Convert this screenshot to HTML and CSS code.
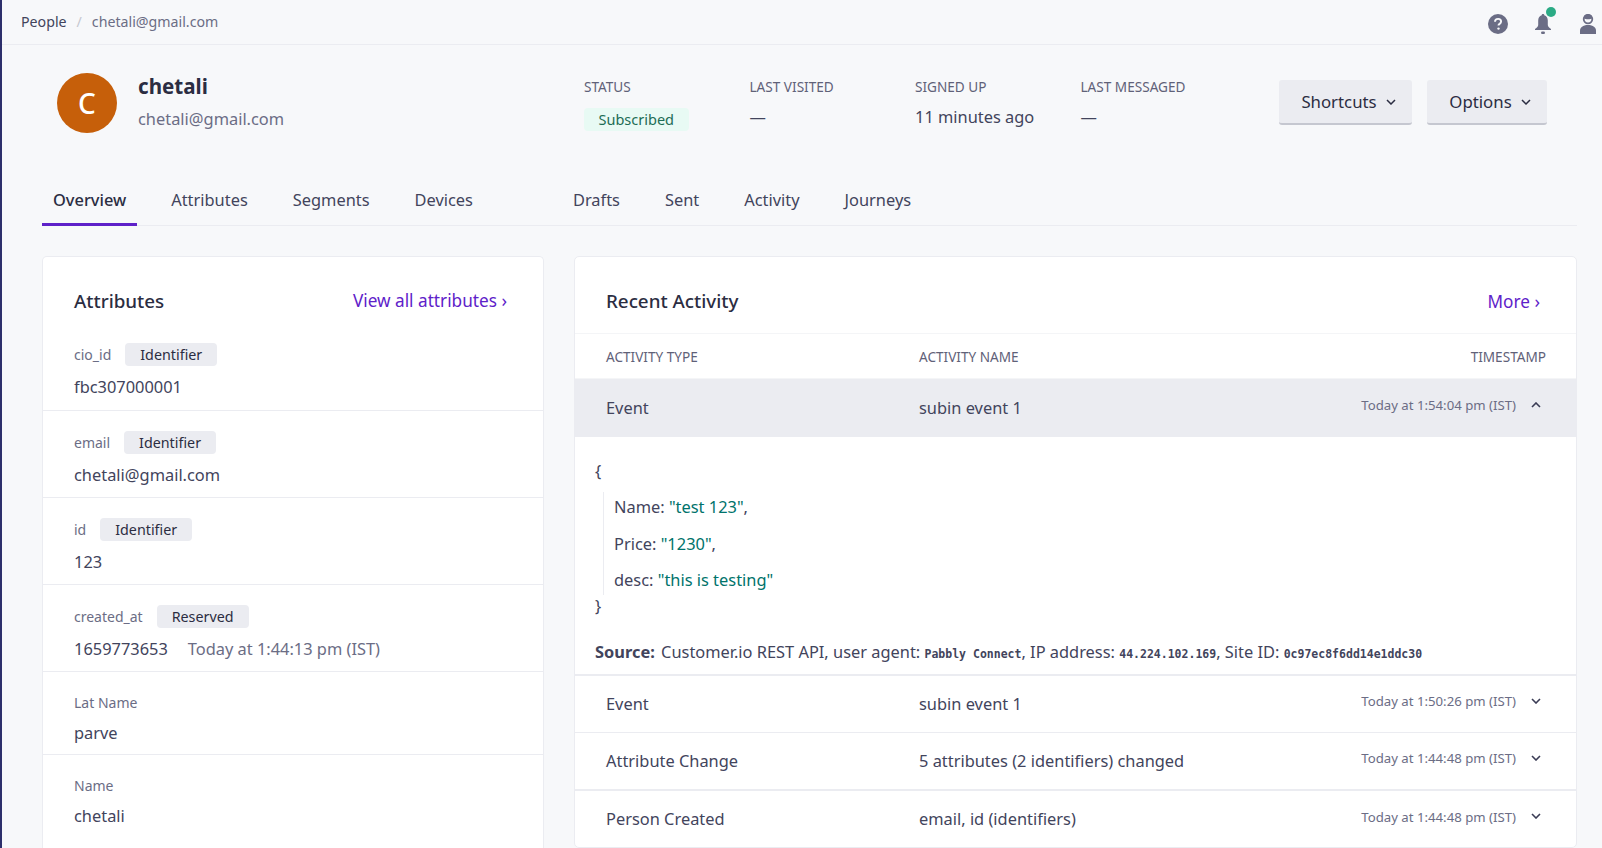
FILE: index.html
```html
<!DOCTYPE html>
<html lang="en">
<head>
    <meta charset="UTF-8">
    <title>chetali@gmail.com - People</title>
    <link rel="stylesheet" href="styles.css">
</head>
<body>
    <div class="topbar">
        <div class="crumbs">
            <span class="crumb_root">People</span>
            <span class="crumb_sep">/</span>
            <span class="crumb_now">chetali@gmail.com</span>
        </div>
        <div class="top_icons">
            <svg class="help_icon" width="20" height="20" viewBox="0 0 20 20">
                <circle cx="10" cy="10" r="10" fill="#6b6d85"/>
                <path d="M7 7.8c0-1.8 1.3-2.9 3.1-2.9 1.8 0 3 1 3 2.6 0 1.2-.6 1.8-1.5 2.4-.8.5-1.1.9-1.1 1.7" fill="none" stroke="#f7f8fa" stroke-width="1.9"/>
                <circle cx="10.5" cy="14.6" r="1.2" fill="#f7f8fa"/>
            </svg>
            <div class="bell_wrap">
                <svg width="16" height="20" viewBox="0 0 16 20">
                    <path d="M8 0c.8 0 1.3.5 1.3 1.3 2.4.7 3.5 2.700 3.500 5.200v4.500c0 1.200 1.200 2.600 3.200 4v1H0v-1c2-1.400 3.200-2.800 3.200-4V6.500c0-2.500 1.100-4.500 3.500-5.200C6.700.5 7.200 0 8 0z" fill="#6b6d85"/>
                    <rect x="6" y="17.500" width="4" height="2.500" rx="1.200" fill="#6b6d85"/>
                </svg>
                <span class="bell_dot"></span>
            </div>
            <svg class="user_icon" width="16" height="20" viewBox="0 0 16 20">
                <path d="M8 0.800a4.300 4.300 0 1 0 0 8.600a4.300 4.300 0 1 0 0-8.600z" fill="none" stroke="#6b6d85" stroke-width="1.800"/>
                <path d="M3.900 4.200c1.400 1.300 6.800 1.300 8.200 0l-.6-2.600-2.500-1h-2l-2.500 1z" fill="#6b6d85"/>
                <path d="M0 20v-3.500c0-3 2.800-5.500 8-5.500s8 2.500 8 5.500V20z" fill="#6b6d85"/>
            </svg>
        </div>
    </div>

    <div class="profile">
        <div class="avatar">C</div>
        <div class="who">
            <div class="who_name">chetali</div>
            <div class="who_mail">chetali@gmail.com</div>
        </div>
        <div class="stats">
            <div class="stat">
                <div class="stat_label">STATUS</div>
                <span class="badge_green">Subscribed</span>
            </div>
            <div class="stat">
                <div class="stat_label">LAST VISITED</div>
                <div class="stat_value">—</div>
            </div>
            <div class="stat">
                <div class="stat_label">SIGNED UP</div>
                <div class="stat_value">11 minutes ago</div>
            </div>
            <div class="stat">
                <div class="stat_label">LAST MESSAGED</div>
                <div class="stat_value">—</div>
            </div>
        </div>
        <div class="actions">
            <button class="action_btn shortcuts_btn">Shortcuts
                <svg width="10" height="6" viewBox="0 0 10 6"><path d="M1 1l4 4 4-4" fill="none" stroke="#2b2d42" stroke-width="1.500"/></svg>
            </button>
            <button class="action_btn options_btn">Options
                <svg width="10" height="6" viewBox="0 0 10 6"><path d="M1 1l4 4 4-4" fill="none" stroke="#2b2d42" stroke-width="1.500"/></svg>
            </button>
        </div>
    </div>

    <div class="tabs">
        <a class="tab tab_active">Overview</a>
        <a class="tab">Attributes</a>
        <a class="tab">Segments</a>
        <a class="tab tab_gap">Devices</a>
        <a class="tab">Drafts</a>
        <a class="tab">Sent</a>
        <a class="tab">Activity</a>
        <a class="tab">Journeys</a>
    </div>

    <div class="content">
        <div class="card attrs">
            <div class="attrs_head">
                <div class="card_title">Attributes</div>
                <a class="card_link">View all attributes <span class="link_arrow">›</span></a>
            </div>
            <div class="attr attr_first">
                <div class="attr_top"><span class="attr_key">cio_id</span><span class="tag">Identifier</span></div>
                <div class="attr_val">fbc307000001</div>
            </div>
            <div class="attr">
                <div class="attr_top"><span class="attr_key">email</span><span class="tag">Identifier</span></div>
                <div class="attr_val">chetali@gmail.com</div>
            </div>
            <div class="attr">
                <div class="attr_top"><span class="attr_key">id</span><span class="tag">Identifier</span></div>
                <div class="attr_val">123</div>
            </div>
            <div class="attr">
                <div class="attr_top"><span class="attr_key">created_at</span><span class="tag">Reserved</span></div>
                <div class="attr_val">1659773653<span class="attr_time">Today at 1:44:13 pm (IST)</span></div>
            </div>
            <div class="attr attr_plain">
                <div class="attr_top"><span class="attr_key">Lat Name</span></div>
                <div class="attr_val">parve</div>
            </div>
            <div class="attr attr_plain">
                <div class="attr_top"><span class="attr_key">Name</span></div>
                <div class="attr_val">chetali</div>
            </div>
        </div>

        <div class="card activity">
            <div class="activity_head">
                <div class="card_title">Recent Activity</div>
                <a class="card_link">More <span class="link_arrow">›</span></a>
            </div>
            <div class="row row_labels">
                <div>ACTIVITY TYPE</div>
                <div>ACTIVITY NAME</div>
                <div class="labels_right">TIMESTAMP</div>
            </div>
            <div class="row row_open">
                <div>Event</div>
                <div>subin event 1</div>
                <div class="row_time">Today at 1:54:04 pm (IST)
                    <svg width="10" height="6" viewBox="0 0 10 6"><path d="M1 5l4-4 4 4" fill="none" stroke="#3a3c55" stroke-width="1.600"/></svg>
                </div>
            </div>
            <div class="detail">
                <div class="json_brace">{</div>
                <div class="json_body">
                    <div class="json_line">Name: <span class="json_str">"test 123"</span>,</div>
                    <div class="json_line">Price: <span class="json_str">"1230"</span>,</div>
                    <div class="json_line">desc: <span class="json_str">"this is testing"</span></div>
                </div>
                <div class="json_brace">}</div>
                <div class="source"><b>Source:</b> Customer.io REST API, user agent: <code>Pabbly Connect</code>, IP address: <code>44.224.102.169</code>, Site ID: <code>0c97ec8f6dd14e1ddc30</code></div>
            </div>
            <div class="row row_first">
                <div>Event</div>
                <div>subin event 1</div>
                <div class="row_time">Today at 1:50:26 pm (IST)
                    <svg width="10" height="6" viewBox="0 0 10 6"><path d="M1 1l4 4 4-4" fill="none" stroke="#3a3c55" stroke-width="1.600"/></svg>
                </div>
            </div>
            <div class="row">
                <div>Attribute Change</div>
                <div>5 attributes (2 identifiers) changed</div>
                <div class="row_time">Today at 1:44:48 pm (IST)
                    <svg width="10" height="6" viewBox="0 0 10 6"><path d="M1 1l4 4 4-4" fill="none" stroke="#3a3c55" stroke-width="1.600"/></svg>
                </div>
            </div>
            <div class="row row_last">
                <div>Person Created</div>
                <div>email, id (identifiers)</div>
                <div class="row_time">Today at 1:44:48 pm (IST)
                    <svg width="10" height="6" viewBox="0 0 10 6"><path d="M1 1l4 4 4-4" fill="none" stroke="#3a3c55" stroke-width="1.600"/></svg>
                </div>
            </div>
        </div>
    </div>
</body>
</html>
```

FILE: styles.css
```css
body {
    margin: 0;
    height: 848px;
    overflow: hidden;
    box-sizing: border-box;
    border-left: 2px solid #2d2f6b;
    background-color: #f7f8fa;
    color: #2b2d42;
    font-family: "Noto Sans", "Open Sans", sans-serif;
    font-size: 16.400px;
}
a {
    text-decoration: none;
}

/* top bar */
.topbar {
    display: flex;
    justify-content: space-between;
    align-items: center;
    height: 44px;
    border-bottom: 1px solid #ebecf1;
    padding-left: 19px;
    padding-right: 6px;
}
.crumbs {
    display: flex;
    gap: 10px;
    margin-bottom: 2px;
    font-size: 14.200px;
}
.crumb_root {
    color: #42445c;
}
.crumb_sep {
    color: #c5c7d0;
}
.crumb_now {
    color: #6b6d85;
}
.top_icons {
    display: flex;
    align-items: center;
    gap: 27px;
    margin-top: 4px;
}
.user_icon {
    margin-left: 2px;
}
.bell_wrap {
    position: relative;
    display: flex;
}
.bell_dot {
    position: absolute;
    top: -7px;
    left: 11px;
    width: 10px;
    height: 10px;
    border-radius: 50%;
    background-color: #2bab85;
}

/* profile */
.profile {
    display: flex;
    padding-top: 28px;
    padding-left: 55px;
    height: 60px;
}
.avatar {
    display: flex;
    justify-content: center;
    align-items: center;
    width: 60px;
    height: 60px;
    border-radius: 50%;
    background-color: #c65f0a;
    color: white;
    font-size: 28px;
    font-weight: 500;
}
.who {
    width: 446px;
    margin-left: 21px;
    margin-top: -2px;
}
.who_name {
    font-size: 20.600px;
    font-weight: 700;
    line-height: 30px;
}
.who_mail {
    margin-top: 3px;
    color: #6b6d85;
    line-height: 30px;
}
.stats {
    display: flex;
    width: 695px;
}
.stat {
    width: 165.500px;
}
.stat_label {
    font-size: 13.600px;
    color: #5f6178;
    line-height: 28px;
}
.stat_value {
    margin-top: 1px;
    line-height: 30px;
    color: #42445c;
}
.badge_green {
    display: inline-block;
    margin-top: 7px;
    padding: 0 14.500px;
    border-radius: 4px;
    background-color: #e8faf4;
    color: #1d6d55;
    font-size: 14.500px;
    line-height: 23px;
}
.actions {
    display: flex;
    gap: 15px;
    margin-top: 7px;
}
.action_btn {
    display: flex;
    align-items: center;
    justify-content: center;
    gap: 9px;
    height: 45px;
    padding: 0 0 0 6px;
    border: none;
    border-bottom: 2px solid #c5c7d0;
    border-radius: 3px;
    background-color: #ebecf1;
    color: #2b2d42;
    font-family: inherit;
    font-size: 16.800px;
}
.shortcuts_btn {
    width: 133px;
}
.options_btn {
    width: 120px;
}

/* tabs */
.tabs {
    display: flex;
    align-items: stretch;
    margin-top: 49px;
    margin-left: 40px;
    margin-right: 25px;
    height: 43px;
    border-bottom: 1px solid #ebecf1;
}
.tab {
    box-sizing: border-box;
    display: flex;
    align-items: center;
    height: 44px;
    padding-left: 11px;
    padding-right: 11px;
    padding-bottom: 10px;
    margin-right: 23px;
    color: #42445c;
}
.tab_active {
    border-bottom: 3px solid #5e21c9;
    padding-bottom: 7px;
    color: #2b2d42;
    font-weight: 500;
}
.tab_gap {
    margin-right: 78px;
}

/* cards */
.content {
    display: grid;
    grid-template-columns: 502px 1003px;
    gap: 30px;
    margin-top: 30px;
    margin-left: 40px;
}
.card {
    box-sizing: border-box;
    height: 592px;
    background-color: white;
    border: 1px solid #ebecf1;
    border-radius: 5px;
}
.card_title {
    font-size: 18.800px;
    font-weight: 500;
}
.card_link {
    color: #5e21c9;
    font-size: 17.200px;
    margin-top: -2px;
}
.link_arrow {
    font-size: 18px;
}

/* attributes */
.attrs {
    border-bottom: none;
    border-bottom-left-radius: 0;
    border-bottom-right-radius: 0;
}
.attrs_head {
    display: flex;
    justify-content: space-between;
    align-items: center;
    height: 30px;
    padding: 29px 36px 0 31px;
}
.attr {
    height: 66px;
    padding-top: 20px;
    padding-left: 31px;
    border-top: 1px solid #ebecf1;
}
.attr_first {
    height: 67px;
    padding-top: 27px;
    border-top: none;
}
.attr_plain {
    height: 63px;
    padding-top: 19px;
}
.attr_top {
    display: flex;
    align-items: center;
    gap: 14px;
    height: 23px;
}
.attr_key {
    font-size: 14px;
    color: #6b6d85;
}
.tag {
    display: inline-block;
    padding: 0 15px;
    border-radius: 4px;
    background-color: #ebecf1;
    color: #2b2d42;
    font-size: 14.300px;
    line-height: 23px;
}
.attr_val {
    margin-top: 9px;
    line-height: 24px;
    color: #42445c;
}
.attr_plain .attr_val {
    margin-top: 7px;
}
.attr_time {
    margin-left: 20px;
    color: #6b6d85;
}

/* recent activity */
.activity_head {
    display: flex;
    justify-content: space-between;
    align-items: center;
    height: 76px;
    padding: 0 36px 0 31px;
    border-bottom: 1px solid #f4f5f7;
}
.activity_head .card_title {
    margin-top: 12px;
}
.activity_head .card_link {
    margin-top: 11px;
}
.row {
    display: grid;
    grid-template-columns: 313px 1fr auto;
    align-items: center;
    height: 54px;
    padding-left: 31px;
    padding-right: 35px;
    padding-bottom: 2px;
    border-top: 1px solid #ebecf1;
    color: #42445c;
}
.row_labels {
    height: 44px;
    padding-right: 30px;
    padding-bottom: 0;
    border-top: none;
    border-bottom: 1px solid #f4f5f7;
    font-size: 13.600px;
    color: #5f6178;
}
.labels_right {
    text-align: right;
}
.row_open {
    height: 56px;
    border-top: none;
    background-color: #ebecf1;
}
.row_first {
    border-top: none;
}
.row_last {
    height: 55px;
    border-top-width: 2px;
}
.row_time {
    display: flex;
    align-items: center;
    gap: 15px;
    margin-top: -4px;
    font-size: 13.200px;
    color: #6b6d85;
}
.row_time svg {
    margin-top: -1px;
}
.detail {
    box-sizing: border-box;
    height: 239px;
    padding-top: 22px;
    padding-left: 20px;
    color: #42445c;
    border-bottom: 2px solid #ebecf1;
}
.json_brace {
    line-height: 24px;
}
.json_body {
    margin: 9px 0 -1px 8px;
    padding-left: 10px;
    border-left: 1px solid #ebecf1;
}
.json_line {
    height: 36.500px;
    line-height: 30px;
}
.json_line:last-child {
    height: 30px;
}
.json_str {
    color: #00736b;
}
.source {
    margin-top: 22px;
    line-height: 24px;
}
.source b {
    font-weight: 700;
    margin-right: 2px;
}
code {
    font-family: "DejaVu Sans Mono", monospace;
    font-size: 11.500px;
    font-weight: 700;
}
```
